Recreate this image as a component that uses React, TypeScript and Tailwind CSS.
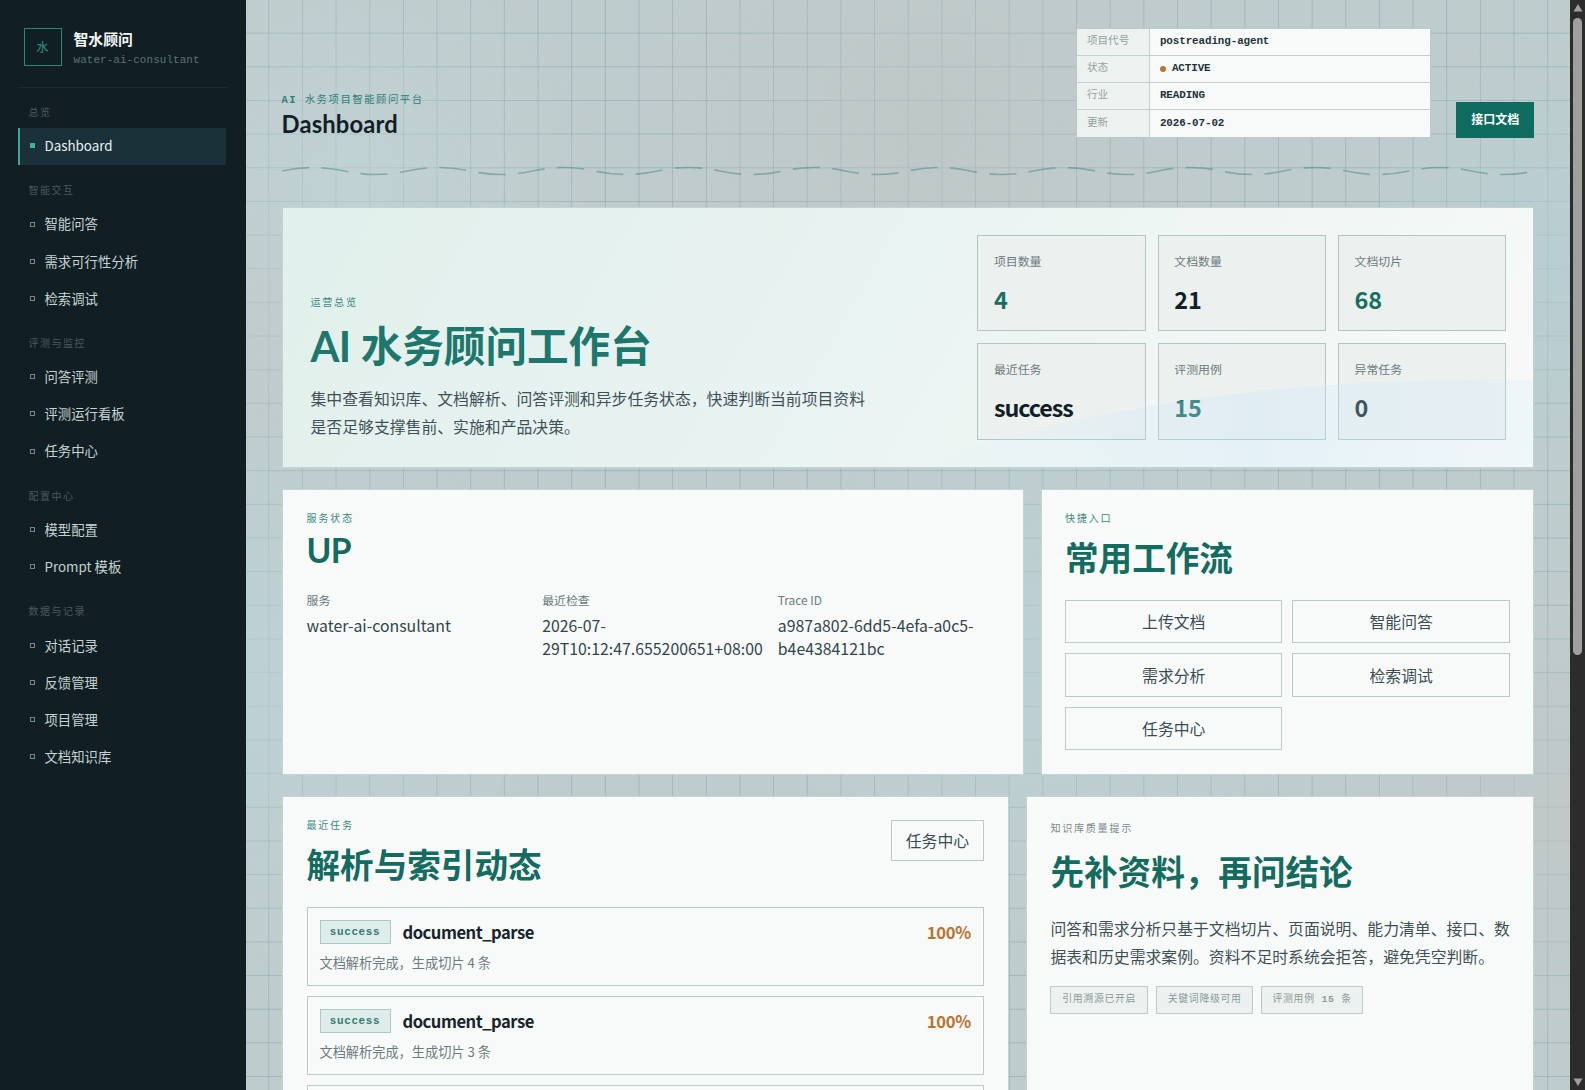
import React from "react";

const SANS = "font-['Noto_Sans_CJK_SC',sans-serif]";
const MONO = "font-['Liberation_Mono','Noto_Sans_CJK_SC',monospace]";
const DISPLAY = "font-['Lato','Noto_Sans_CJK_SC',sans-serif]";

const groups = [
  { label: "总览", items: ["Dashboard"] },
  { label: "智能交互", items: ["智能问答", "需求可行性分析", "检索调试"] },
  { label: "评测与监控", items: ["问答评测", "评测运行看板", "任务中心"] },
  { label: "配置中心", items: ["模型配置", "Prompt 模板"] },
  { label: "数据与记录", items: ["对话记录", "反馈管理", "项目管理", "文档知识库"] },
];

const meta = [
  ["项目代号", "postreading-agent"],
  ["状态", "ACTIVE"],
  ["行业", "READING"],
  ["更新", "2026-07-02"],
];

const stats = [
  { label: "项目数量", value: "4", color: "text-[#17705f]" },
  { label: "文档数量", value: "21", color: "text-[#131f26]" },
  { label: "文档切片", value: "68", color: "text-[#17705f]" },
  { label: "最近任务", value: "success", color: "text-[#131f26] tracking-[-1.1px]" },
  { label: "评测用例", value: "15", color: "text-[#17705f]" },
  { label: "异常任务", value: "0", color: "text-[#131f26]" },
];

function Sidebar() {
  return (
    <aside className="flex h-full w-[245.5px] shrink-0 flex-col bg-[#111f24] px-[17.5px] pt-[28px]">
      <div className="flex h-[60px] shrink-0 items-start gap-[12px] border-b border-[#1b2b30] pl-[6px]">
        <div className={`flex size-[38px] items-center justify-center border-[1.5px] border-[#2a8577] pt-[3px] text-[12px] font-medium text-[#2a8577] ${MONO}`}>水</div>
        <div className="flex flex-col">
          <span className="h-[21px] text-[14.85px] leading-[21px] font-bold text-[#f3f8f7]">智水顾问</span>
          <span className={`mt-[3px] text-[10.9px] leading-[16px] tracking-[0.1px] text-[#5d7174] ${MONO}`}>water-ai-consultant</span>
        </div>
      </div>
      <nav className="flex flex-col gap-[19.8px] pt-[18px]">
        {groups.map((g) => (
          <div key={g.label} className="flex flex-col">
            <div className={`mb-[6.5px] h-[15px] pl-[11px] text-[10px] leading-[15px] tracking-[1.5px] text-[#49595d] ${MONO}`}>{g.label}</div>
            {g.items.map((item) => {
              const active = item === "Dashboard";
              return (
                <div
                  key={item}
                  className={`flex h-[37.15px] w-[208px] items-center gap-[10px] border-l-2 pl-[10px] text-[13.36px] ${active ? "border-[#3fa796] bg-[#1a3139] text-[#e9f2f1]" : "border-transparent text-[#c5d2d2]"}`}
                >
                  <span className={`mb-px size-[5px] shrink-0 ${active ? "bg-[#44b09e]" : "border border-[#748689]"}`} />
                  {item}
                </div>
              );
            })}
          </div>
        ))}
      </nav>
    </aside>
  );
}

function Wave() {
  let d = "M0 7";
  for (let i = 0; i < 20; i++) {
    d += ` q31.3 ${i % 2 === 0 ? -7 : 7} 62.6 0`;
  }
  return (
    <svg className="mt-[26.2px] h-[14px] w-[1252px] shrink-0" viewBox="0 0 1252 14" fill="none">
      <path d={d} stroke="#3f7f7a" strokeOpacity="0.45" strokeWidth="1.7" strokeDasharray="27.2 12.4" />
    </svg>
  );
}

function Header() {
  return (
    <header className="flex shrink-0 items-end">
      <div className="flex flex-1 flex-col">
        <div className={`h-[16px] text-[10.4px] leading-[16px] tracking-[1.5px] text-[#2d7f77] ${MONO}`}>
          <b>AI</b> 水务项目智能顾问平台
        </div>
        <h1 className={`mb-[-2.2px] h-[32px] text-[23.8px] leading-[32px] font-bold tracking-[0.15px] text-[#131f26] ${DISPLAY}`}>Dashboard</h1>
      </div>
      <div className={`w-[355.5px] border border-[#b7cac8] bg-[#f8faf9] text-[10.9px] ${MONO}`}>
        {meta.map(([k, v], i) => (
          <div key={k} className={`flex h-[27px] ${i < 3 ? "border-b border-[#c2d0ce]" : ""}`}>
            <div className="flex w-[73px] items-center border-r border-[#c2d0ce] bg-[#edf2f1] pt-px pl-[10px] text-[10.6px] text-[#95a2a2]">{k}</div>
            <div className="flex items-center pl-[10px] font-bold text-[#22333a]">
              {i === 1 && <span className="mr-[6px] size-[6px] rounded-full bg-[#b8742f]" />}
              <span className="tracking-[-0.1px]">{v}</span>
            </div>
          </div>
        ))}
      </div>
      <div className="ml-[24.5px] flex h-[35.5px] w-[78.5px] items-center justify-center bg-[#0e6b60] pb-[2px] text-[12px] font-bold text-white">接口文档</div>
    </header>
  );
}

function Eyebrow({ children, gray = false }: { children: React.ReactNode; gray?: boolean }) {
  return <div className={`h-[16px] text-[10.1px] leading-[16px] tracking-[1.7px] ${gray ? "text-[#7b8989]" : "text-[#3b8a80]"} ${MONO}`}>{children}</div>;
}

function Hero() {
  return (
    <section className="relative mt-[28.8px] flex h-[261px] shrink-0 border border-[#c3d3d1] bg-[linear-gradient(120deg,#e1f0ec_0%,#e9f3f1_45%,#f8faf9_100%)] pr-[27px] pl-[28px]">
      <div className="flex w-[640px] flex-col pt-[88px]">
        <Eyebrow>运营总览</Eyebrow>
        <h2 className={`mt-[4px] h-[60px] text-[41.6px] leading-[60px] font-bold whitespace-nowrap text-[#1d776c] ${DISPLAY}`}>
          <span className="tracking-[-0.6px]">AI</span> 水务顾问工作台
        </h2>
        <p className="mt-[9.5px] w-[560px] text-[15.85px] leading-[27.6px] text-[#3f5157]">
          集中查看知识库、文档解析、问答评测和异步任务状态，快速判断当前项目资料是否足够支撑售前、实施和产品决策。
        </p>
      </div>
      <div className="mt-[27px] ml-auto grid h-[205.5px] w-[529px] grid-cols-3 grid-rows-2 gap-[12px]">
        {stats.map((s) => (
          <div key={s.label} className="border border-[#b3c5c3] bg-[#ecf1f0] px-[15.5px] pt-[15px]">
            <div className="h-[20px] text-[11.9px] leading-[20px] text-[#6c7b7d]">{s.label}</div>
            <div className={`mt-[10px] h-[36px] text-[23.4px] leading-[36px] font-bold ${s.color}`}>{s.value}</div>
          </div>
        ))}
      </div>
      <svg className="absolute right-0 bottom-0 h-[87px] w-[626px]" viewBox="0 0 626 87" preserveAspectRatio="none">
        <defs>
          <linearGradient id="water" x1="0" x2="1" y1="0" y2="0">
            <stop offset="0" stopColor="#c4e4fb" stopOpacity="0" />
            <stop offset="0.55" stopColor="#c4e4fb" stopOpacity="0.3" />
            <stop offset="1" stopColor="#cfe8fb" stopOpacity="0.2" />
          </linearGradient>
        </defs>
        <path d="M0 87 C120 45 300 2 560 0 H626 V87 Z" fill="url(#water)" />
      </svg>
    </section>
  );
}

const CARD = "border border-[#c6d3d1] bg-[#f8faf9]";

function Outline({ children, className = "" }: { children: React.ReactNode; className?: string }) {
  return <div className={`flex items-center justify-center border border-[#b9cac8] pt-px text-[15.85px] text-[#3b4d54] ${className}`}>{children}</div>;
}

function Title({ children }: { children: React.ReactNode }) {
  return <h3 className="text-[33.6px] leading-[48px] font-bold text-[#146b60]">{children}</h3>;
}

function Status() {
  const cols = [
    ["服务", "water-ai-consultant"],
    ["最近检查", "2026-07-29T10:12:47.655200651+08:00"],
    ["Trace ID", "a987a802-6dd5-4efa-a0c5-b4e4384121bc"],
  ];
  return (
    <section className={`${CARD} w-[742px] px-[24px] pt-[22.3px]`}>
      <Eyebrow>服务状态</Eyebrow>
      <h3 className={`mt-[-2.5px] h-[48px] text-[33.6px] leading-[48px] font-bold tracking-[-0.8px] text-[#146b60] ${DISPLAY}`}>UP</h3>
      <div className="mt-[16px] grid grid-cols-3 gap-[15px]">
        {cols.map(([k, v]) => (
          <div key={k}>
            <div className="h-[20px] text-[11.9px] leading-[20px] text-[#6c7b7d]">{k}</div>
            <div className="mt-[4px] text-[15.85px] leading-[23px] text-[#33444c]">{v}</div>
          </div>
        ))}
      </div>
    </section>
  );
}

function Shortcuts() {
  return (
    <section className={`${CARD} flex-1 px-[23.5px] pt-[22.3px]`}>
      <Eyebrow>快捷入口</Eyebrow>
      <div className="mt-[4.5px]"><Title>常用工作流</Title></div>
      <div className="mt-[19.3px] grid auto-rows-[43.5px] grid-cols-2 gap-[10px]">
        {["上传文档", "智能问答", "需求分析", "检索调试", "任务中心"].map((t) => (
          <Outline key={t}>{t}</Outline>
        ))}
      </div>
    </section>
  );
}

function Tasks() {
  return (
    <section className={`${CARD} flex w-[727.5px] flex-col px-[24px] pt-[22.5px]`}>
      <div className="flex items-start justify-between">
        <div>
          <Eyebrow>最近任务</Eyebrow>
          <div className="mt-[4.5px]"><Title>解析与索引动态</Title></div>
        </div>
        <Outline className="mt-[0.5px] h-[41px] w-[93px]">任务中心</Outline>
      </div>
      <div className="mt-[19.5px] flex flex-col gap-[10px]">
        {["文档解析完成，生成切片 4 条", "文档解析完成，生成切片 3 条"].map((t) => (
          <div key={t} className="h-[79px] shrink-0 border border-[#b9cac8] px-[12px] pt-[12px]">
            <div className="flex h-[24px] items-center gap-[12px]">
              <span className={`flex h-[24px] w-[71px] items-center justify-center border border-[#a9cbc5] bg-[#deecea] text-[10.9px] font-bold tracking-[0.7px] text-[#347a70] ${MONO}`}>success</span>
              <span className="text-[16.6px] font-bold tracking-[-0.5px] text-[#17242b]">document_parse</span>
              <span className="ml-auto text-[16.6px] font-bold tracking-[-0.3px] text-[#b8742f]">100%</span>
            </div>
            <div className="mt-[8.5px] text-[13.2px] leading-[20px] text-[#6c7b7d]">{t}</div>
          </div>
        ))}
        <div className="h-[79px] shrink-0 border border-[#b9cac8]" />
      </div>
    </section>
  );
}

function Quality() {
  return (
    <section className={`${CARD} flex-1 px-[23.5px] pt-[25.3px]`}>
      <Eyebrow gray>知识库质量提示</Eyebrow>
      <div className="mt-[8.5px]"><Title>先补资料，再问结论</Title></div>
      <p className="mt-[20.5px] text-[15.85px] leading-[27.7px] whitespace-nowrap text-[#3f5157]">
        问答和需求分析只基于文档切片、页面说明、能力清单、接口、数
        <br />
        据表和历史需求案例。资料不足时系统会拒答，避免凭空判断。
      </p>
      <div className={`mt-[15.5px] flex gap-[8px] text-[9.9px] tracking-[0.7px] text-[#8d9b9b] ${MONO}`}>
        {["引用溯源已开启", "关键词降级可用"].map((t) => (
          <span key={t} className="flex h-[28px] w-[97.5px] items-center justify-center border border-[#bccdca] bg-[#ecf1f0] pt-px">{t}</span>
        ))}
        <span className="flex h-[28px] w-[101.5px] items-center justify-center border border-[#bccdca] bg-[#ecf1f0] pt-px whitespace-pre">评测用例 <b>15</b> 条</span>
      </div>
    </section>
  );
}

function Scrollbar() {
  return (
    <div className="flex h-full w-[15px] shrink-0 flex-col items-center bg-[#2c2c2c]">
      <svg className="mt-[4px] h-[8px] w-[10px]" viewBox="0 0 10 8"><path d="M5 0 L9.5 7.5 H0.5 Z" fill="#9f9f9f" /></svg>
      <div className="mt-[6px] h-[637px] w-[9px] rounded-full bg-[#9f9f9f]" />
      <svg className="mt-auto mb-[4px] h-[8px] w-[10px]" viewBox="0 0 10 8"><path d="M5 8 L9.5 0.5 H0.5 Z" fill="#9f9f9f" /></svg>
    </div>
  );
}

export default function App() {
  return (
    <div className={`flex h-[1090px] w-[1585px] overflow-hidden bg-[#bfcccd] ${SANS}`}>
      <div className="flex min-w-0 flex-1 bg-[linear-gradient(to_right,transparent_32.66px,rgba(90,135,135,0.3)_32.66px),linear-gradient(to_bottom,transparent_32.66px,rgba(90,135,135,0.3)_32.66px)] bg-size-[33.66px_33.66px]">
        <Sidebar />
        <main className="flex min-w-0 flex-1 flex-col bg-[radial-gradient(circle_at_8%_16%,rgba(194,213,217,0.6),transparent_16%),radial-gradient(circle_at_100%_24%,rgba(181,207,213,0.7),transparent_15%),radial-gradient(circle_at_52%_12%,rgba(190,196,195,0.55),transparent_25%),radial-gradient(circle_at_0%_30%,rgba(194,201,201,0.6),transparent_10%),radial-gradient(circle_at_0%_62%,rgba(189,211,217,0.7),transparent_22%),radial-gradient(circle_at_60%_60%,rgba(188,210,216,0.6),transparent_30%),radial-gradient(circle_at_100%_75%,rgba(193,198,198,0.7),transparent_16%)] pt-[27.6px] pr-[35.6px] pl-[36px]">
          <Header />
          <Wave />
          <Hero />
          <div className="mt-[21.3px] flex h-[286px] shrink-0 gap-[17px]">
            <Status />
            <Shortcuts />
          </div>
          <div className="mt-[21px] flex h-[400px] shrink-0 gap-[17px]">
            <Tasks />
            <Quality />
          </div>
        </main>
      </div>
      <Scrollbar />
    </div>
  );
}
